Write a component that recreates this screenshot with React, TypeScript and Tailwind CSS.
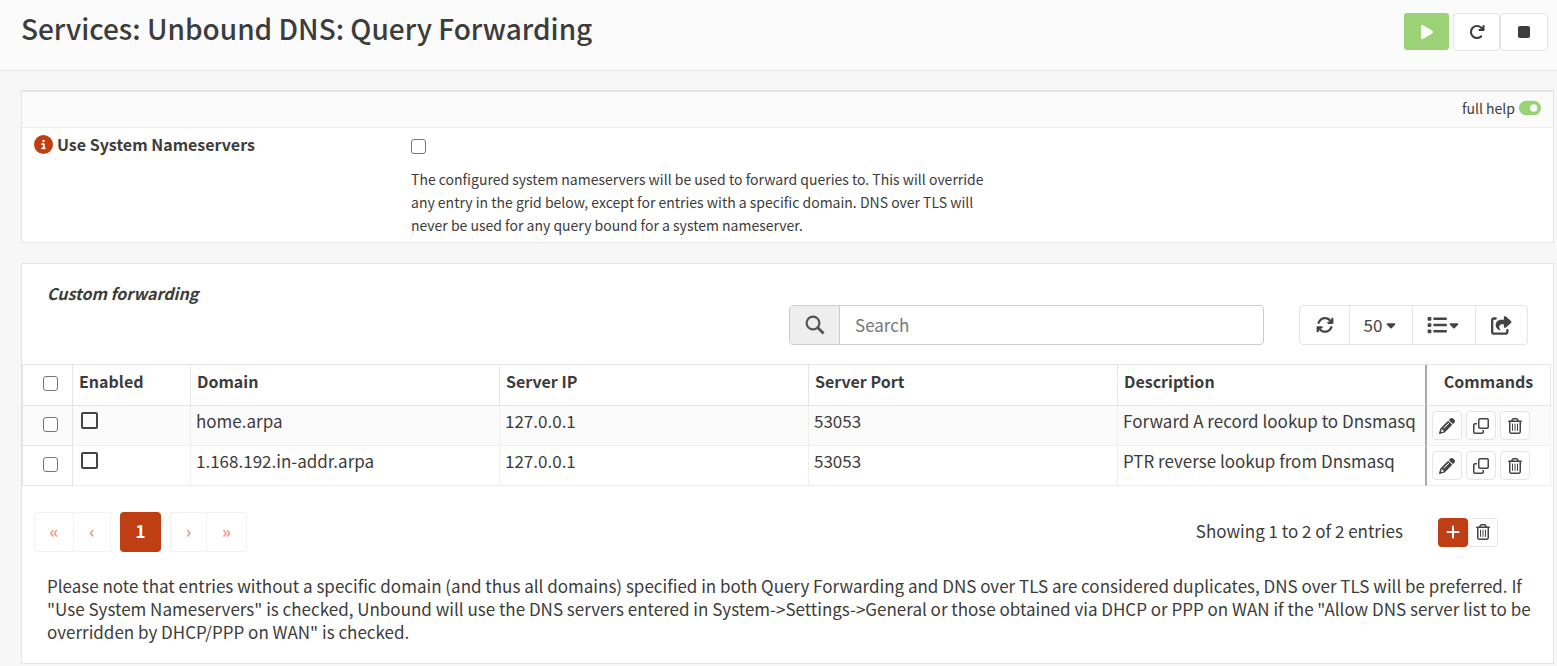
import { useState } from "react";
import {
  FaArrowRotateRight,
  FaArrowsRotate,
  FaCaretDown,
  FaCircleInfo,
  FaList,
  FaPencil,
  FaPlay,
  FaPlus,
  FaRegClone,
  FaRegTrashCan,
  FaShareFromSquare,
  FaStop,
  FaToggleOn,
} from "react-icons/fa6";

type Forward = {
  domain: string;
  server: string;
  port: string;
  description: string;
};

const forwards: Forward[] = [
  {
    domain: "home.arpa",
    server: "127.0.0.1",
    port: "53053",
    description: "Forward A record lookup to Dnsmasq",
  },
  {
    domain: "1.168.192.in-addr.arpa",
    server: "127.0.0.1",
    port: "53053",
    description: "PTR reverse lookup from Dnsmasq",
  },
];

const tick =
  "block size-[15px] shrink-0 appearance-none rounded-[3px] border border-[#767676] bg-white checked:bg-[#c03e14]";
const iconButton =
  "flex h-[29px] w-[30px] items-center justify-center rounded-[4px] border border-[#e5e5e5] bg-white text-base text-[#444]";
const toolButton =
  "flex items-center justify-center border-l border-[#e5e5e5] text-[#444] first:border-l-0";
const pageButton =
  "flex h-10 items-center justify-center border border-[#f2f2f2] pb-[2px] font-bold text-[#e09f8a]";
const headCell = "border-r border-[#e5e5e5] px-[6px] pt-[5px] text-base leading-[22px] font-bold";
const bodyCell = "border-r border-[#efefef] px-[5px] pt-[3px]";

function SearchIcon() {
  return (
    <svg viewBox="0 0 20 20" className="size-5 text-[#555]" fill="none" stroke="currentColor" aria-hidden="true">
      <circle cx="8" cy="8" r="6.4" strokeWidth="2.2" />
      <path d="M12.6 12.6 18.6 18.4" strokeWidth="2.8" />
    </svg>
  );
}

function ServiceHeader() {
  return (
    <header className="flex items-start justify-between border-b border-[#e5e5e5] bg-[#fbfbfb] pt-[13px] pr-[9px] pb-[19px] pl-[21px]">
      <h1 className="text-[28px] leading-[30px] font-medium">Services: Unbound DNS: Query Forwarding</h1>
      <div className="flex">
        <button
          type="button"
          aria-label="Start"
          className="mr-1 flex h-[37px] w-[45px] items-center justify-center rounded-[3px] bg-[#9bd275] text-base text-white"
        >
          <FaPlay />
        </button>
        <button
          type="button"
          aria-label="Restart"
          className="flex h-[38px] w-[47px] items-center justify-center rounded-[4px] border border-[#e5e5e5] bg-white text-base"
        >
          <FaArrowRotateRight />
        </button>
        <button
          type="button"
          aria-label="Stop"
          className="flex h-[38px] w-12 items-center justify-center rounded-[4px] border border-[#e5e5e5] bg-white text-base"
        >
          <FaStop />
        </button>
      </div>
    </header>
  );
}

function GeneralPanel() {
  const [useSystem, setUseSystem] = useState(false);
  return (
    <section className="border border-t-2 border-[#e5e5e5] bg-white">
      <div className="flex h-9 items-center justify-end border-b border-[#efefef] bg-[#fbfbfb] pr-3 pb-[3px]">
        <button type="button" className="flex items-center gap-1 text-sm leading-5">
          full help
          <FaToggleOn className="size-[22px] text-[#9bd275]" />
        </button>
      </div>
      <div className="flex px-3 pt-[5px] pb-[5px]">
        <label
          htmlFor="use-system"
          className="flex w-[377px] shrink-0 items-center gap-1 self-start text-base leading-[22px] font-bold"
        >
          <FaCircleInfo className="size-[19px] text-[#c03e14]" />
          Use System Nameservers
        </label>
        <div className="w-[592px] pt-[6px]">
          <input
            id="use-system"
            type="checkbox"
            className={tick}
            checked={useSystem}
            onChange={(event) => setUseSystem(event.target.checked)}
          />
          <p className="mt-[14px] text-sm leading-[23px]">
            The configured system nameservers will be used to forward queries to. This will override any entry in the
            grid below, except for entries with a specific domain. DNS over TLS will never be used for any query bound
            for a system nameserver.
          </p>
        </div>
      </div>
    </section>
  );
}

function Toolbar() {
  return (
    <div className="flex justify-end gap-[35px] pr-[25px]">
      <div className="flex h-10 w-[475px] overflow-hidden rounded-[4px] border border-[#ccc]">
        <label
          htmlFor="search"
          aria-label="Search"
          className="flex w-[50px] shrink-0 items-center justify-center border-r border-[#ccc] bg-[#eee]"
        >
          <SearchIcon />
        </label>
        <input
          id="search"
          type="text"
          placeholder="Search"
          className="min-w-0 flex-1 px-[15px] outline-none placeholder:text-[#777]"
        />
      </div>
      <div className="flex h-10 rounded-[4px] border border-[#e5e5e5]">
        <button type="button" aria-label="Refresh" className={`${toolButton} w-[49px]`}>
          <FaArrowsRotate className="size-[18px]" />
        </button>
        <button type="button" className={`${toolButton} w-[63px] gap-[2px]`}>
          50
          <FaCaretDown className="size-[14px]" />
        </button>
        <button type="button" aria-label="Columns" className={`${toolButton} w-[63px]`}>
          <FaList className="size-5" />
          <FaCaretDown className="size-[14px]" />
        </button>
        <button type="button" aria-label="Export" className={`${toolButton} w-[52px]`}>
          <FaShareFromSquare className="size-[21px]" />
        </button>
      </div>
    </div>
  );
}

function ForwardTable() {
  return (
    <div className="mt-[19px] pr-[2px]">
      <table className="w-full table-fixed border-separate border-spacing-0 border-t border-l border-[#e5e5e5] text-left leading-[23px]">
        <colgroup>
          <col className="w-[50px]" />
          <col className="w-[118px]" />
          <col />
          <col />
          <col />
          <col />
          <col className="w-[124px]" />
        </colgroup>
        <thead>
          <tr className="h-[41px] align-top [&>th]:border-b">
            <th className="border-r border-[#e5e5e5] pt-[11px]">
              <input type="checkbox" aria-label="Select all" className={`${tick} ml-5`} />
            </th>
            <th className={headCell}>Enabled</th>
            <th className={headCell}>Domain</th>
            <th className={headCell}>Server IP</th>
            <th className={headCell}>Server Port</th>
            <th className="border-r-2 border-r-[#aaa] border-b-[#e5e5e5] px-[6px] pt-[5px] text-base leading-[22px] font-bold">
              Description
            </th>
            <th className={`${headCell} text-center`}>Commands</th>
          </tr>
        </thead>
        <tbody>
          {forwards.map((row) => (
            <tr key={row.domain} className="h-10 align-top odd:bg-[#fbfbfb] [&>td]:border-b">
              <td className="border-r border-[#e5e5e5] pt-[11px]">
                <input type="checkbox" aria-label={`Select ${row.domain}`} className={`${tick} ml-5`} />
              </td>
              <td className="border-r border-[#efefef] px-2 pt-[6px]">
                <input
                  type="checkbox"
                  aria-label={`Enable ${row.domain}`}
                  className="block size-[17px] appearance-none rounded-[2px] border-2 border-[#444] checked:bg-[#444]"
                />
              </td>
              <td className={bodyCell}>{row.domain}</td>
              <td className={bodyCell}>{row.server}</td>
              <td className={bodyCell}>{row.port}</td>
              <td className="truncate border-r-2 border-r-[#aaa] border-b-[#efefef] px-[5px] pt-[3px]">
                {row.description}
              </td>
              <td className="border-r border-[#efefef] pt-[5px] pl-[5px]">
                <div className="flex gap-1">
                  <button type="button" aria-label="Edit" className={iconButton}>
                    <FaPencil />
                  </button>
                  <button type="button" aria-label="Clone" className={iconButton}>
                    <FaRegClone />
                  </button>
                  <button type="button" aria-label="Delete" className={iconButton}>
                    <FaRegTrashCan />
                  </button>
                </div>
              </td>
            </tr>
          ))}
        </tbody>
      </table>
    </div>
  );
}

function GridFooter() {
  return (
    <div className="mt-[26px] flex items-center justify-between pr-[55px] pl-3">
      <nav aria-label="Pages" className="flex gap-[9px]">
        <div className="flex">
          <button type="button" aria-label="First page" className={`${pageButton} w-10 rounded-l-[4px]`}>
            «
          </button>
          <button type="button" aria-label="Previous page" className={`${pageButton} w-[37px] border-l-0`}>
            ‹
          </button>
        </div>
        <button
          type="button"
          className="flex h-10 w-[41px] items-center justify-center rounded-[4px] bg-[#c03e14] pb-[2px] font-bold text-white"
        >
          1
        </button>
        <div className="flex">
          <button type="button" aria-label="Next page" className={`${pageButton} w-[37px]`}>
            ›
          </button>
          <button type="button" aria-label="Last page" className={`${pageButton} w-10 rounded-r-[4px] border-l-0`}>
            »
          </button>
        </div>
      </nav>
      <div className="flex items-center">
        <span className="mr-[35px] pb-[2px]">Showing 1 to 2 of 2 entries</span>
        <button
          type="button"
          aria-label="Add"
          className="flex h-[29px] w-[30px] items-center justify-center rounded-[4px] bg-[#c03e14] text-base text-white"
        >
          <FaPlus />
        </button>
        <button type="button" aria-label="Delete selected" className={iconButton}>
          <FaRegTrashCan />
        </button>
      </div>
    </div>
  );
}

export default function App() {
  return (
    <div className="min-h-screen bg-[#f7f7f7] font-['Noto_Sans_CJK_SC','Noto_Sans',sans-serif] text-[17px] text-[#3c3c3b]">
      <ServiceHeader />
      <main className="flex flex-col gap-5 pt-[19px] pr-[3px] pb-[2px] pl-[21px]">
        <GeneralPanel />
        <section className="border border-[#e5e5e5] bg-white">
          <h2 className="pt-[18px] pl-[25px] text-base leading-[23px] font-bold italic">Custom forwarding</h2>
          <Toolbar />
          <ForwardTable />
          <GridFooter />
          <p className="pt-[22px] pr-[15px] pb-5 pl-[25px] leading-[23px]">
            Please note that entries without a specific domain (and thus all domains) specified in both Query Forwarding
            and DNS over TLS are considered duplicates, DNS over TLS will be preferred. If "Use System Nameservers" is
            checked, Unbound will use the DNS servers entered in System-&gt;Settings-&gt;General or those obtained via
            DHCP or PPP on WAN if the "Allow DNS server list to be overridden by DHCP/PPP on WAN" is checked.
          </p>
        </section>
      </main>
    </div>
  );
}
